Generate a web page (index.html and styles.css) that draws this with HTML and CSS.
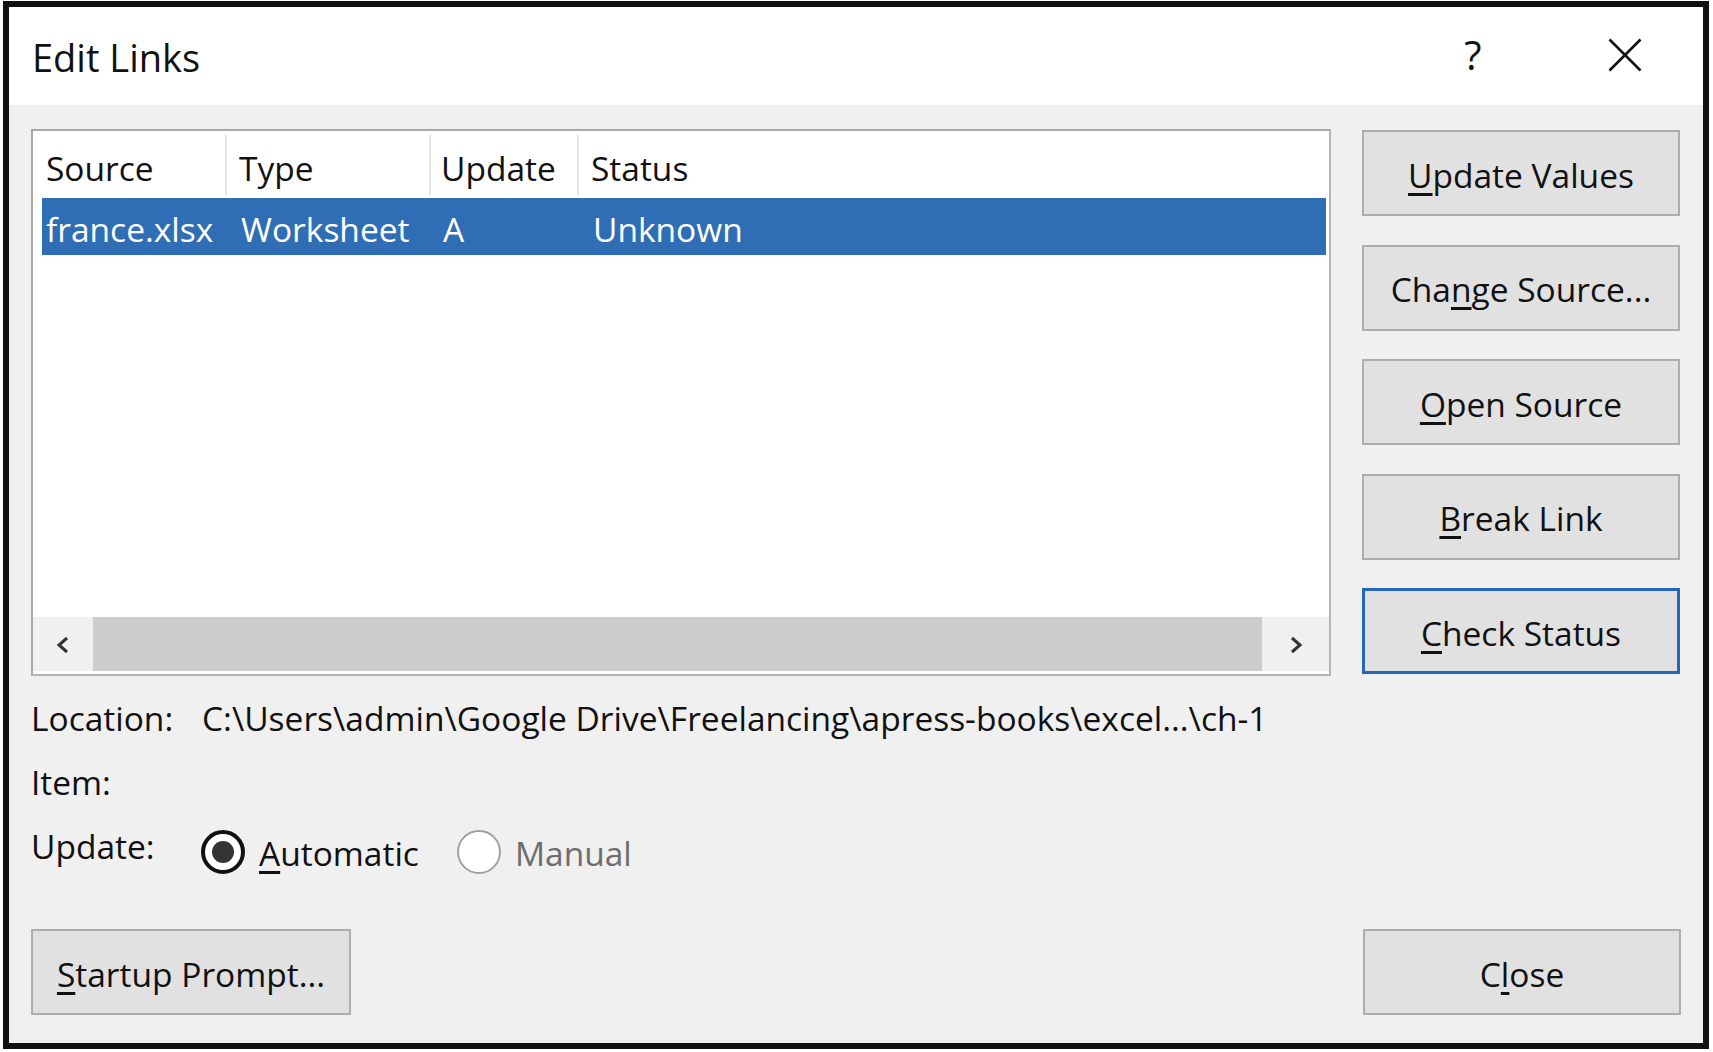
FILE: index.html
```html
<!DOCTYPE html>
<html lang="en">
<head>
<meta charset="utf-8">
<title>Edit Links</title>
<link rel="stylesheet" href="styles.css">
</head>
<body>
<div class="dialog">
  <div class="titlebar">
    <span class="title">Edit Links</span>
    <span class="help">?</span>
    <svg class="close-x" width="34" height="34" viewBox="0 0 34 34"><path d="M1.5 1.5 L32.5 32.5 M32.5 1.5 L1.5 32.5" stroke="#111" stroke-width="2.6" fill="none"/></svg>
  </div>
  <div class="main">
    <div class="top">
      <div class="list">
        <div class="list-head">
          <div class="hc c1">Source</div>
          <div class="hc c2">Type</div>
          <div class="hc c3">Update</div>
          <div class="hc c4">Status</div>
        </div>
        <div class="list-row">
          <div class="rc r1">france.xlsx</div>
          <div class="rc r2">Worksheet</div>
          <div class="rc r3">A</div>
          <div class="rc r4">Unknown</div>
        </div>
        <div class="list-space"></div>
        <div class="hscroll">
          <div class="sb-btn sb-left"><svg width="18" height="20" viewBox="0 0 18 20"><polyline points="13,3 5,10 13,17" fill="none" stroke="#333" stroke-width="3"/></svg></div>
          <div class="sb-thumb"></div>
          <div class="sb-btn sb-right"><svg width="18" height="20" viewBox="0 0 18 20"><polyline points="5,3 13,10 5,17" fill="none" stroke="#333" stroke-width="3"/></svg></div>
        </div>
      </div>
      <div class="side-buttons">
        <div class="btn"><span><u>U</u>pdate Values</span></div>
        <div class="btn"><span>Cha<u>n</u>ge Source...</span></div>
        <div class="btn"><span><u>O</u>pen Source</span></div>
        <div class="btn"><span><u>B</u>reak Link</span></div>
        <div class="btn btn-focus"><span><u>C</u>heck Status</span></div>
      </div>
    </div>
    <div class="info">
      <div class="info-row row-loc"><span class="lbl">Location:</span><span class="val">C:\Users\admin\Google Drive\Freelancing\apress-books\excel...\ch-1</span></div>
      <div class="info-row row-item"><span class="lbl">Item:</span></div>
      <div class="info-row row-update">
        <span class="lbl">Update:</span>
        <div class="radios">
          <div class="radio"><span class="circle on"><span class="dot"></span></span><span class="rlabel"><u>A</u>utomatic</span></div>
          <div class="radio disabled"><span class="circle"></span><span class="rlabel">Manual</span></div>
        </div>
      </div>
    </div>
    <div class="bottom">
      <div class="btn btn-startup"><span><u>S</u>tartup Prompt...</span></div>
      <div class="btn btn-close"><span>C<u>l</u>ose</span></div>
    </div>
  </div>
</div>
</body>
</html>
```
FILE: styles.css
```css
* { box-sizing: border-box; }
html, body { margin: 0; padding: 0; background: #fff; }
body {
  font-family: "Open Sans", "Noto Sans", "DejaVu Sans", sans-serif;
  color: #111;
  font-size: 33.5px;
}
u {
  text-decoration-thickness: 3px;
  text-underline-offset: 5px;
}

.dialog {
  margin: 1px 0 0 3px;
  width: 1706px;
  height: 1048px;
  border: 6px solid #111;
  background: #f0f0f0;
  display: flex;
  flex-direction: column;
}

.titlebar {
  height: 98px;
  background: #fff;
  display: flex;
  align-items: center;
  padding-left: 23px;
  flex: none;
}
.title {
  flex: 1;
  font-size: 38px;
  line-height: 1;
  padding-top: 2px;
}
.help {
  width: 40px;
  text-align: center;
  font-size: 40px;
  line-height: 1;
  padding-bottom: 2px;
}
.close-x {
  margin-left: 115px;
  margin-right: 61px;
  margin-bottom: 2px;
}

.main {
  flex: 1;
  display: flex;
  flex-direction: column;
  padding: 24px 22px 28px 22px;
}

.top {
  display: flex;
  gap: 31px;
}

.list {
  width: 1300px;
  height: 547px;
  border: 2px solid #a9a9a9;
  border-right-color: #b4b4b4;
  border-bottom-color: #b4b4b4;
  background: #fff;
  display: flex;
  flex-direction: column;
  padding-top: 4px;
}
.list-head {
  display: flex;
  height: 60px;
}
.hc {
  height: 60px;
  display: flex;
  align-items: center;
  padding-top: 6px;
  border-right: 2px solid #e6e6e6;
  white-space: nowrap;
}
.hc.c1 { width: 194px; padding-left: 13px; }
.hc.c2 { width: 204px; padding-left: 12px; }
.hc.c3 { width: 148px; padding-left: 10px; }
.hc.c4 { flex: 1; padding-left: 12px; border-right: none; }

.list-row {
  display: flex;
  height: 57px;
  margin: 3px 3px 0 9px;
  background: #2f6eb5;
  color: #fff;
}
.rc {
  display: flex;
  align-items: center;
  padding-top: 5px;
  white-space: nowrap;
}
.rc.r1 { width: 185px; padding-left: 4px; }
.rc.r2 { width: 204px; padding-left: 14px; }
.rc.r3 { width: 148px; padding-left: 12px; }
.rc.r4 { flex: 1; padding-left: 14px; }

.list-space { flex: 1; }

.hscroll {
  height: 54px;
  margin-bottom: 3px;
  display: flex;
  background: #f0f0f0;
}
.sb-btn {
  display: flex;
  align-items: center;
  justify-content: center;
  padding-top: 2px;
}
.sb-left { width: 60px; }
.sb-right { width: 67px; }
.sb-thumb {
  flex: 1;
  background: #cdcdcd;
}

.side-buttons {
  width: 318px;
  margin-top: 1px;
  display: flex;
  flex-direction: column;
  gap: 28.5px;
}

.btn {
  height: 86px;
  flex: none;
  background: #e1e1e1;
  border: 2px solid #adadad;
  display: flex;
  align-items: center;
  justify-content: center;
  padding-top: 3px;
  white-space: nowrap;
}
.btn-focus {
  border: 3px solid #2566b8;
}

.info {
  margin-top: 20px;
  display: flex;
  flex-direction: column;
}
.info-row {
  display: flex;
  align-items: flex-start;
  line-height: 44px;
  height: 44px;
}
.lbl {
  width: 171px;
  flex: none;
}
.val { white-space: nowrap; }
.row-item { margin-top: 20px; }
.row-update { margin-top: 20px; height: 50px; }

.radios {
  display: flex;
  gap: 38px;
  margin-left: -1px;
  margin-top: 5px;
}
.radio {
  display: flex;
  align-items: center;
  gap: 14px;
}
.circle {
  width: 44px;
  height: 44px;
  flex: none;
  border-radius: 50%;
  background: #fff;
  border: 2px solid #a0a0a0;
  display: flex;
  align-items: center;
  justify-content: center;
}
.circle.on {
  border: 4px solid #111;
}
.dot {
  width: 22px;
  height: 22px;
  border-radius: 50%;
  background: #333;
}
.rlabel {
  line-height: 44px;
  padding-top: 2px;
}
.radio.disabled .rlabel { color: #6d6d6d; }

.bottom {
  margin-top: auto;
  display: flex;
  justify-content: space-between;
}
.btn-startup { width: 320px; }
.btn-close { width: 318px; }
```
